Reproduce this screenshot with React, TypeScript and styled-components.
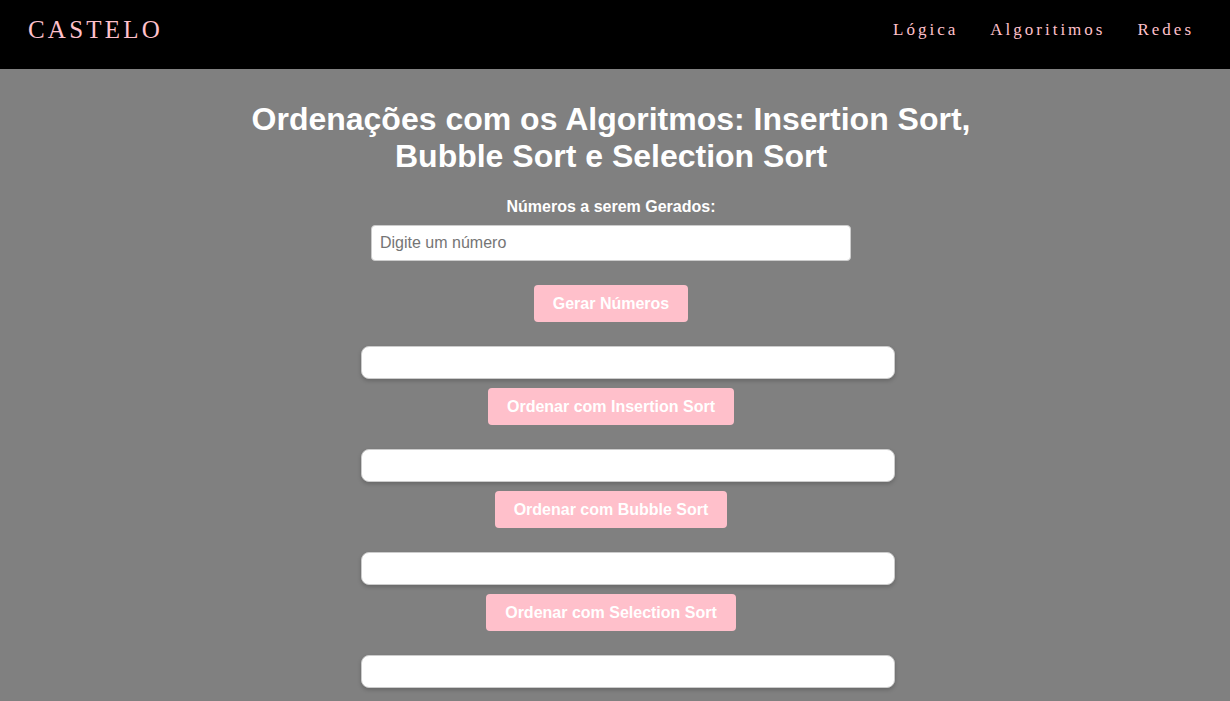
import React from "react";
import styled, { createGlobalStyle } from "styled-components";

const Global = createGlobalStyle`
  html, body { margin: 0; padding: 0; background: #808080; }
  body { font-family: "Liberation Sans", Arial, sans-serif; }
`;

const Header = styled.header`
  height: 69px;
  box-sizing: border-box;
  background: #000;
  display: flex;
  align-items: center;
  justify-content: space-between;
  padding: 0 36px 9px 28px;
`;

const Logo = styled.div`
  font-family: "Liberation Serif", "DejaVu Serif", serif;
  font-size: 25px;
  letter-spacing: 3.2px;
  color: #ffc0cb;
`;

const Nav = styled.nav`
  display: flex;
  gap: 32px;
`;

const NavLink = styled.a`
  font-family: "Liberation Serif", "DejaVu Serif", serif;
  font-size: 17px;
  letter-spacing: 3px;
  color: #ffc0cb;
  text-decoration: none;
`;

const Main = styled.main`
  display: flex;
  flex-direction: column;
  align-items: center;
  padding: 32px 8px 12px 0;
  color: #fff;
`;

const Title = styled.h1`
  margin: 0;
  max-width: 760px;
  text-align: center;
  font-size: 32px;
  line-height: 37px;
  font-weight: 700;
`;

const Label = styled.label`
  margin-top: 23px;
  font-size: 16px;
  font-weight: 700;
  line-height: 18px;
`;

const Input = styled.input`
  margin-top: 9px;
  width: 480px;
  height: 36px;
  box-sizing: border-box;
  padding: 0 8px;
  border: 1px solid #ccc;
  border-radius: 4px;
  font-family: "Liberation Sans", Arial, sans-serif;
  font-size: 16px;
  &::placeholder { color: #757575; }
`;

const Button = styled.button<{ $top: number }>`
  margin-top: ${(p) => p.$top}px;
  height: 37px;
  padding: 0 19px;
  background: #ffc0cb;
  color: #fff;
  border: none;
  border-radius: 4px;
  font-family: "Liberation Sans", Arial, sans-serif;
  font-size: 16px;
  font-weight: 700;
`;

const Output = styled.div`
  margin-top: 24px;
  margin-left: 34px;
  width: 534px;
  height: 33px;
  box-sizing: border-box;
  background: #fff;
  border: 1px solid #ccc;
  border-radius: 8px;
  box-shadow: 0 2px 4px rgba(0, 0, 0, 0.2);
`;

const sorts = ["Insertion Sort", "Bubble Sort", "Selection Sort"];

export default function App() {
  return (
    <>
      <Global />
      <Header>
        <Logo>CASTELO</Logo>
        <Nav>
          <NavLink href="#">Lógica</NavLink>
          <NavLink href="#">Algoritimos</NavLink>
          <NavLink href="#">Redes</NavLink>
        </Nav>
      </Header>
      <Main>
        <Title>Ordenações com os Algoritmos: Insertion Sort, Bubble Sort e Selection Sort</Title>
        <Label>Números a serem Gerados:</Label>
        <Input placeholder="Digite um número" />
        <Button $top={24}>Gerar Números</Button>
        {sorts.map((s) => (
          <React.Fragment key={s}>
            <Output />
            <Button $top={9}>Ordenar com {s}</Button>
          </React.Fragment>
        ))}
        <Output />
      </Main>
    </>
  );
}
